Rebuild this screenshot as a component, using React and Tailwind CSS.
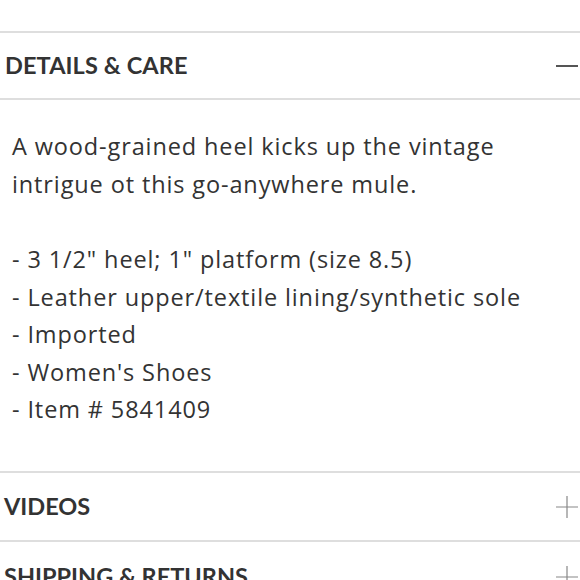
export default function App() {
  const items = [
    '- 3 1/2" heel; 1" platform (size 8.5)',
    '- Leather upper/textile lining/synthetic sole',
    '- Imported',
    "- Women's Shoes",
    '- Item # 5841409',
  ]

  return (
    <div className="w-[580px] h-[580px] overflow-hidden bg-white text-[#333] font-['Lato',sans-serif]">
      <div className="h-[33px] border-b-2 border-[#dedede]" />

      {/* open section */}
      <div className="h-[67px] flex items-center justify-between pl-[5px] border-b-2 border-[#dedede]">
        <h2 className="text-[23.5px] font-bold tracking-[0.1px]">DETAILS &amp; CARE</h2>
        <span className="w-[22px] h-[2px] bg-[#555] mr-[2px]" />
      </div>

      <div className="h-[373px] pl-[12px] pt-[28px] text-[23.5px] leading-[37.5px] tracking-[0.88px] font-['Open_Sans',sans-serif] border-b-2 border-[#dedede]">
        <p>
          A wood-grained heel kicks up the vintage
          <br />
          intrigue ot this go-anywhere mule.
        </p>
        <p className="mt-[38px]">
          {items.map(t => (
            <span key={t} className="block">{t}</span>
          ))}
        </p>
      </div>

      <div className="h-[69px] flex items-center justify-between pl-[4px] border-b-2 border-[#dedede]">
        <h2 className="text-[23.5px] font-bold">VIDEOS</h2>
        <Plus />
      </div>

      <div className="h-[69px] flex items-center justify-between pl-[4px]">
        <h2 className="text-[23.5px] font-bold whitespace-nowrap">SHIPPING &amp; RETURNS</h2>
        <Plus />
      </div>
    </div>
  )
}

function Plus() {
  return (
    <svg width="22" height="22" viewBox="0 0 22 22" className="mr-[2px]">
      <path d="M11 0v22M0 11h22" stroke="#888" strokeWidth="1.2" />
    </svg>
  )
}
